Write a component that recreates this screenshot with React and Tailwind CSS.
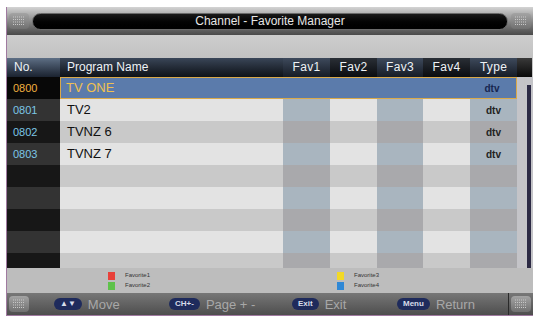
import React from "react";

const rows = [
  { no: "0800", name: "TV ONE", type: "dtv" },
  { no: "0801", name: "TV2", type: "dtv" },
  { no: "0802", name: "TVNZ 6", type: "dtv" },
  { no: "0803", name: "TVNZ 7", type: "dtv" },
  {}, {}, {}, {}, {},
];

const favCols = [
  { w: "w-[47px]", tint: true },
  { w: "w-[47px]", tint: false },
  { w: "w-[46px]", tint: true },
  { w: "w-[47px]", tint: false },
];

function CornerGrid() {
  return (
    <div className="w-[20px] h-[16px] rounded-sm bg-gradient-to-b from-[#a4a4a4] to-[#707070] flex items-center justify-center">
      <svg width="14" height="10" viewBox="0 0 14 10">
        {[1, 3.5, 6, 8.5].map((y) => (
          <line key={y} x1="1" x2="13" y1={y} y2={y} stroke="#c8c8c8" strokeWidth="1" strokeDasharray="1 1" />
        ))}
      </svg>
    </div>
  );
}

function Key({ label, text }) {
  return (
    <div className="flex items-center gap-[6px]">
      <span className="h-[12px] px-[6px] rounded-full bg-[#1f2b5c] text-[#d8dcea] text-[8px] leading-[12px] font-bold">
        {label}
      </span>
      <span className="text-[13px] text-[#a8a8a8] leading-none">{text}</span>
    </div>
  );
}

function Row({ r, i }) {
  const sel = i === 0;
  const light = i % 2 === 1;
  const noBg = sel ? "bg-[#080808]" : light ? "bg-[#333333]" : "bg-[#171717]";
  const base = light ? "bg-[#e3e3e3]" : "bg-[#c9c9c9]";
  const tint = light ? "bg-[#a9b5bf]" : "bg-[#a9a9ac]";
  return (
    <div className="flex h-[22px] shrink-0">
      <div className={`w-[53px] ${noBg} flex items-center pl-[6px] text-[11px] ${sel ? "text-[#f0b040]" : "text-[#7cc6e6]"}`}>
        {r.no}
      </div>
      {sel ? (
        <div className="w-[457px] bg-[#5b7bab] border-[1.5px] border-[#d9a94a] flex items-center">
          <div className="w-[221px] pl-[5px] text-[13px] text-[#f0c050]">{r.name}</div>
          <div className="w-[187px]" />
          <div className="w-[46px] text-center text-[10px] font-bold text-[#172650]">{r.type}</div>
        </div>
      ) : (
        <>
          <div className={`w-[223px] ${base} flex items-center pl-[7px] text-[13px] text-[#111]`}>{r.name}</div>
          {favCols.map((c, k) => (
            <div key={k} className={`${c.w} ${c.tint ? tint : base}`} />
          ))}
          <div className={`w-[47px] ${tint} flex items-center justify-center text-[10px] font-bold text-[#222]`}>
            {r.type}
          </div>
        </>
      )}
      <div className="w-[7px] bg-[#c4c4c8]" />
    </div>
  );
}

export default function App() {
  return (
    <div className="w-[539px] h-[320px] bg-white pt-[7px] pl-[6px] overflow-hidden" style={{ fontFamily: '"Liberation Sans", Arial, sans-serif' }}>
      <div className="w-[527px] h-[309px] border-l border-b border-[#a07aa0] flex flex-col bg-[#c4c4c4]">
        {/* title bar */}
        <div className="h-[28px] shrink-0 bg-gradient-to-b from-[#d4d4d4] via-[#8a8a8a] to-[#4a4a4a] flex items-center px-[2px] gap-[3px]">
          <CornerGrid />
          <div className="flex-1 h-[17px] rounded-full bg-gradient-to-b from-[#1a1a1a] to-[#000] border border-[#6a6a6a] flex items-center justify-center text-[12px] text-[#e6e6e6]">
            Channel - Favorite Manager
          </div>
          <CornerGrid />
        </div>
        <div className="h-[23px] shrink-0 bg-gradient-to-b from-[#cdcdcd] to-[#c2c2c2]" />
        {/* header */}
        <div className="flex h-[19px] shrink-0 text-[12px] text-[#eef2f6] leading-[19px]">
          <div className="w-[53px] pl-[7px] bg-gradient-to-b from-[#5e6f85] to-[#1b2330]">No.</div>
          <div className="w-[223px] pl-[7px] bg-gradient-to-b from-[#3a4658] to-[#0e1218]">Program Name</div>
          <div className="w-[47px] text-center bg-gradient-to-b from-[#3e4a5c] to-[#161c26] tracking-wide">Fav1</div>
          <div className="w-[47px] text-center bg-gradient-to-b from-[#2a2f36] to-[#0a0c10] tracking-wide">Fav2</div>
          <div className="w-[46px] text-center bg-gradient-to-b from-[#3e4a5c] to-[#161c26] tracking-wide">Fav3</div>
          <div className="w-[47px] text-center bg-gradient-to-b from-[#2a2f36] to-[#0a0c10] tracking-wide">Fav4</div>
          <div className="w-[47px] text-center bg-gradient-to-b from-[#3e4a5c] to-[#161c26] tracking-wide">Type</div>
          <div className="w-[15px] bg-gradient-to-b from-[#3a3a3a] to-[#0a0a0a]" />
        </div>
        {/* list */}
        <div className="relative h-[191px] shrink-0 overflow-hidden flex flex-col">
          {rows.map((r, i) => (
            <Row key={i} r={r} i={i} />
          ))}
          <div className="absolute right-0 top-0 w-[8px] h-full bg-[#c4c4c8] flex justify-center pt-[8px]">
            <div className="w-[4px] h-full bg-[#2c2a44]" />
          </div>
        </div>
        {/* legend */}
        <div className="h-[25px] shrink-0 bg-[#bdbdbd] flex text-[6px] text-[#333]">
          <div className="w-[330px] flex flex-col justify-center gap-[1px] pl-[101px]">
            <div className="flex items-center gap-[10px]"><span className="w-[7px] h-[8px] bg-[#e8413a]" />Favorite1</div>
            <div className="flex items-center gap-[10px]"><span className="w-[7px] h-[8px] bg-[#5ec24a]" />Favorite2</div>
          </div>
          <div className="flex flex-col justify-center gap-[1px]">
            <div className="flex items-center gap-[10px]"><span className="w-[7px] h-[8px] bg-[#f2d926]" />Favorite3</div>
            <div className="flex items-center gap-[10px]"><span className="w-[7px] h-[8px] bg-[#2f88d6]" />Favorite4</div>
          </div>
        </div>
        {/* footer */}
        <div className="flex-1 bg-gradient-to-b from-[#777777] to-[#4e4e4e] flex items-center px-[2px]">
          <CornerGrid />
          <div className="flex-1 flex items-center pl-[25px]">
            <div className="w-[115px]"><Key label="▲▼" text="Move" /></div>
            <div className="w-[123px]"><Key label="CH+-" text="Page + -" /></div>
            <div className="w-[105px]"><Key label="Exit" text="Exit" /></div>
            <div><Key label="Menu" text="Return" /></div>
          </div>
          <div className="w-px h-full bg-[#2a2a2a] mr-[2px]" />
          <CornerGrid />
        </div>
      </div>
    </div>
  );
}
